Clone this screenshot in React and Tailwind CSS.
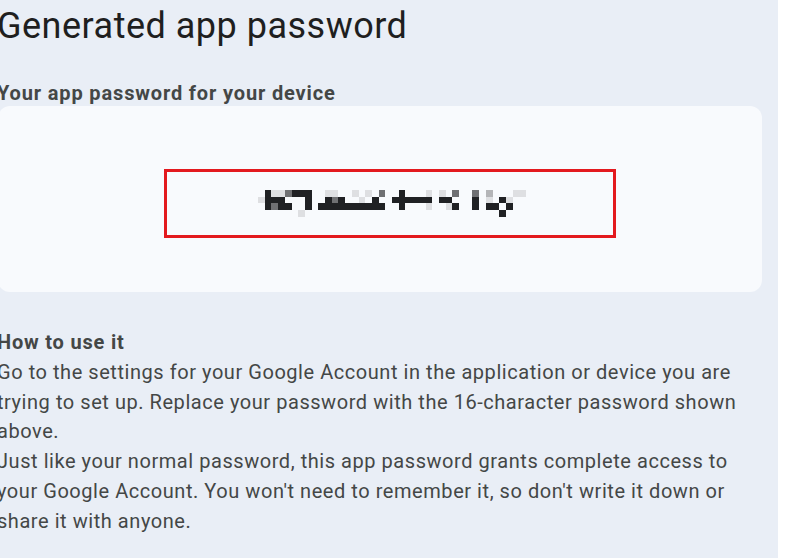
import React from "react";

const rows = [
  ".daacddd" + "..aa..a.a.c" + "..d...a.a.c" + "..c.b...aa",
  "addd...d" + "..dcd..a.d." + ".dddddd.dd." + "..d.a.da..",
  ".dcdd..d" + ".dddddddddd" + "..d...a..ad" + "..d.dd.d..",
  "......a." + "..........." + "..........." + "......d...",
];
const colors = { a: "#dedfe2", b: "#b4b5b8", c: "#6f7073", d: "#202124" };

function Mosaic() {
  const s = 6.7;
  const cells = [];
  rows.forEach((r, y) => {
    r.split("").forEach((ch, x) => {
      if (colors[ch]) {
        cells.push(
          <rect key={`${x}-${y}`} x={x * s} y={y * s} width={s} height={s} fill={colors[ch]} />
        );
      }
    });
  });
  return (
    <svg width={268} height={27} viewBox="0 0 268 27" shapeRendering="crispEdges">
      {cells}
    </svg>
  );
}

export default function App() {
  return (
    <div className="w-[793px] h-[558px] bg-white overflow-hidden" style={{ fontFamily: "Roboto, 'Liberation Sans', sans-serif" }}>
      <div className="w-[778px] h-full bg-[#e9eef6]">
        <div className="ml-[-3px] w-[765px] pt-[4px]">
          <h1 className="text-[36px] leading-[44px] font-normal text-[#1f1f1f] tracking-[0.5px]">
            Generated app password
          </h1>
          <div className="mt-[33px] text-[20px] leading-[24px] font-bold text-[#444746] tracking-[0.85px]">
            Your app password for your device
          </div>
          <div className="ml-[1px] mt-[1px] h-[186px] rounded-[12px] bg-[#f8fafd] pt-[63px] pl-[166px]">
            <div className="w-[452px] h-[69px] border-[3px] border-[#e3191e] flex items-center justify-center pl-[4px]">
              <Mosaic />
            </div>
          </div>
          <div className="mt-[36px] text-[20px] leading-[29.8px] text-[#444746] tracking-[0.55px]">
            <div className="font-bold tracking-[0.8px]">How to use it</div>
            <p>
              Go to the settings for your Google Account in the application or device you are trying to set up. Replace your password with the 16-character password shown above.
            </p>
            <p>
              Just like your normal password, this app password grants complete access to your Google Account. You won't need to remember it, so don't write it down or share it with anyone.
            </p>
          </div>
        </div>
      </div>
    </div>
  );
}
